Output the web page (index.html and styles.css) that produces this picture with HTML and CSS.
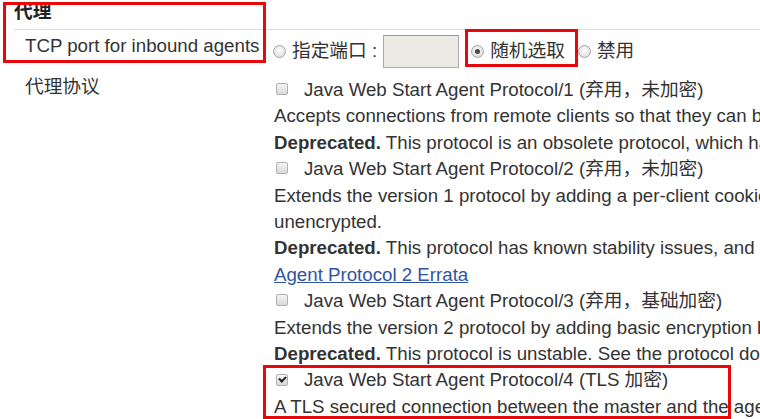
FILE: index.html
```html
<!DOCTYPE html>
<html lang="zh-CN">
<head>
<meta charset="utf-8">
<title>代理</title>
<link rel="stylesheet" href="styles.css">
</head>
<body>
<div class="page">
  <div class="section-header">代理</div>
  <div class="form">
    <div class="label row-port">TCP port for inbound agents</div>
    <div class="field port-field">
      <label class="opt"><span class="radio"></span><span>指定端口 :</span></label>
      <span class="port-input"></span>
      <label class="opt opt-random"><span class="radio checked"></span><span>随机选取</span></label>
      <label class="opt opt-off"><span class="radio"></span><span>禁用</span></label>
    </div>

    <div class="label row-proto">代理协议</div>
    <div class="field protocols">
      <div class="proto">
        <div class="line check-line"><span class="checkbox"></span><span>Java Web Start Agent Protocol/1 (弃用，未加密)</span></div>
        <div class="line">Accepts connections from remote clients so that they can be used as additional build agents. This protocol is unencrypted.</div>
        <div class="line"><b>Deprecated.</b> This protocol is an obsolete protocol, which has been replaced by JNLP2-connect. It is also not encrypted.</div>
      </div>
      <div class="proto">
        <div class="line check-line"><span class="checkbox"></span><span>Java Web Start Agent Protocol/2 (弃用，未加密)</span></div>
        <div class="line">Extends the version 1 protocol by adding a per-client cookie, so that we can support reconnection to the same agent. This protocol is</div>
        <div class="line">unencrypted.</div>
        <div class="line"><b>Deprecated.</b> This protocol has known stability issues, and has been replaced by JNLP4. It is also not encrypted. See the documentation:</div>
        <div class="line"><a href="#">Agent Protocol 2 Errata</a></div>
      </div>
      <div class="proto">
        <div class="line check-line"><span class="checkbox"></span><span>Java Web Start Agent Protocol/3 (弃用，基础加密)</span></div>
        <div class="line">Extends the version 2 protocol by adding basic encryption but requires a thread per client. This protocol falls back to</div>
        <div class="line"><b>Deprecated.</b> This protocol is unstable. See the protocol documentation for more info.</div>
      </div>
      <div class="proto">
        <div class="line check-line"><span class="checkbox checked"></span><span>Java Web Start Agent Protocol/4 (TLS 加密)</span></div>
        <div class="line">A TLS secured connection between the master and the agent performed by TLS upgrade of the socket.</div>
      </div>
    </div>
  </div>

  <div class="mark mark-1"></div>
  <div class="mark mark-2"></div>
  <div class="mark mark-3"></div>
</div>
</body>
</html>
```
FILE: styles.css
```css
html, body {
  margin: 0;
  padding: 0;
  overflow: hidden;
  background: #fff;
}
body {
  font-family: "Liberation Sans", Arial, "Noto Sans CJK SC", sans-serif;
  font-size: 18.7px;
  line-height: 26.4px;
  color: #333;
}
.page {
  position: relative;
  width: 760px;
  height: 419px;
  overflow: hidden;
}
.section-header {
  box-sizing: border-box;
  height: 30px;
  margin-left: 14px;
  line-height: 24px;
  font-weight: bold;
  color: #222;
  border-bottom: 1px solid #dedede;
}
.form {
  display: grid;
  grid-template-columns: 273px auto;
}
.label {
  padding-left: 25px;
  white-space: nowrap;
}
.row-port {
  padding-top: 3px;
}
.port-field {
  display: flex;
  align-items: center;
  padding-top: 5px;
  white-space: nowrap;
}
.opt {
  display: inline-flex;
  align-items: center;
  gap: 6px;
}
.radio {
  box-sizing: border-box;
  width: 13px;
  height: 13px;
  border-radius: 50%;
  border: 1px solid #a6a6a6;
  background: radial-gradient(circle at 50% 40%, #fbfbfb 0%, #e6e6e6 60%, #d2d2d2 100%);
  display: inline-flex;
  align-items: center;
  justify-content: center;
}
.radio.checked::after {
  content: "";
  width: 5px;
  height: 5px;
  border-radius: 50%;
  background: #4a4a4a;
}
.port-input {
  box-sizing: border-box;
  width: 76px;
  height: 33px;
  margin-left: 6px;
  background: #ebebe4;
  border: 1px solid #aaa;
  border-top-color: #999;
}
.opt-random {
  margin-left: 12px;
}
.opt-off {
  margin-left: 13px;
}
.row-proto {
  padding-top: 6px;
}
.protocols {
  padding-top: 9px;
  padding-left: 1px;
}
.line {
  white-space: nowrap;
}
.check-line {
  display: flex;
  align-items: center;
}
.checkbox {
  box-sizing: border-box;
  width: 12px;
  height: 12px;
  margin: -2px 16px 0 2px;
  border: 1px solid #b0b0b0;
  border-radius: 2px;
  background: linear-gradient(#f4f4f4, #d9d9d9);
  display: inline-flex;
  align-items: center;
  justify-content: center;
}
.checkbox.checked::after {
  content: "";
  width: 5px;
  height: 3px;
  margin-top: -2px;
  border-left: 2px solid #222;
  border-bottom: 2px solid #222;
  transform: rotate(-45deg);
}
a {
  color: #2f55a0;
  text-decoration: underline;
}
b {
  color: #333;
}
.mark {
  position: absolute;
  box-sizing: border-box;
  border: 3px solid #e8070b;
}
.mark-1 {
  left: 3px;
  top: 2px;
  width: 263px;
  height: 61px;
}
.mark-2 {
  left: 465px;
  top: 29px;
  width: 113px;
  height: 38px;
}
.mark-3 {
  left: 263px;
  top: 365px;
  width: 468px;
  height: 54px;
}
```
